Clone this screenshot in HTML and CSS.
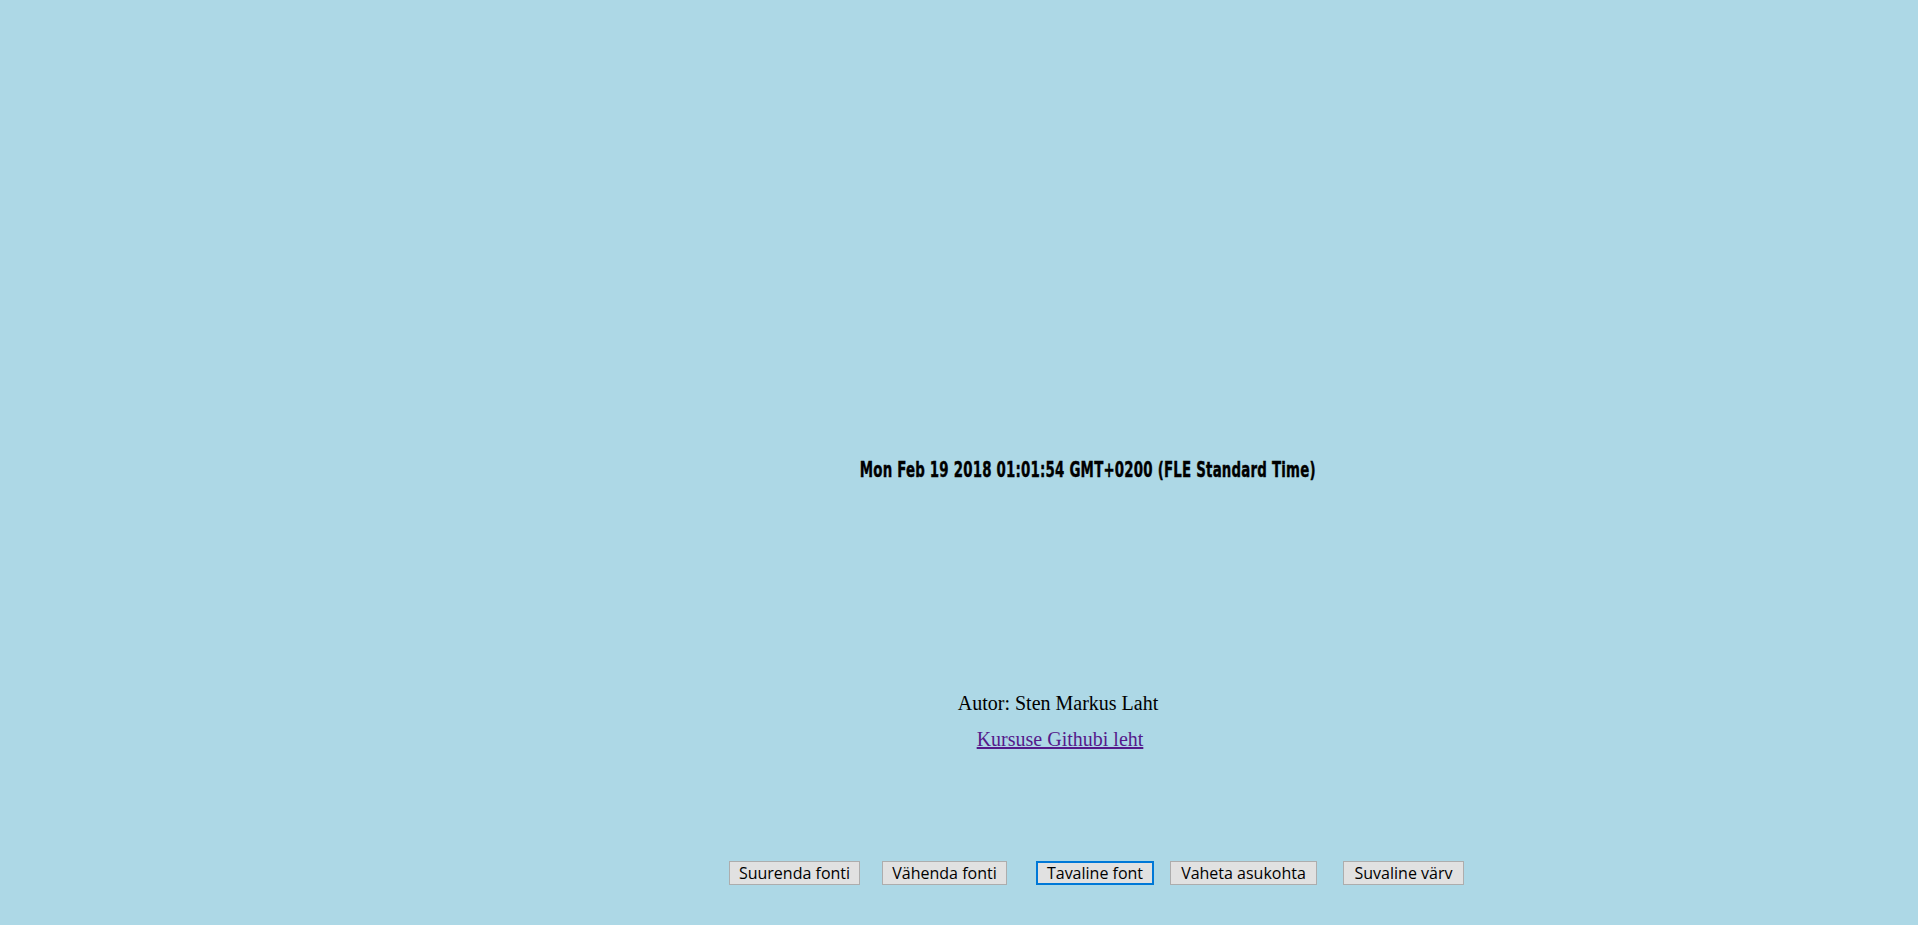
FILE: index.html
```html
<!DOCTYPE html>
<html>
<head>
<meta charset="utf-8">
<link rel="stylesheet" href="styles.css">
</head>
<body>
<div class="page">
  <div class="clock"><span class="clock-text">Mon Feb 19 2018 01:01:54 GMT+0200 (FLE Standard Time)</span></div>
  <div class="author">Autor: Sten Markus Laht</div>
  <div class="linkrow"><a href="#" class="gh">Kursuse Githubi leht</a></div>
  <div class="buttons">
    <button class="btn b1">Suurenda fonti</button>
    <button class="btn b2">Vähenda fonti</button>
    <button class="btn b3 focus">Tavaline font</button>
    <button class="btn b4">Vaheta asukohta</button>
    <button class="btn b5">Suvaline värv</button>
  </div>
</div>
</body>
</html>
```

FILE: styles.css
```css
html, body {
  margin: 0;
  padding: 0;
  background: #add8e6;
}
.page {
  height: 925px;
  display: flex;
  flex-direction: column;
  font-family: "Liberation Serif", "Times New Roman", serif;
}
.clock {
  margin-top: 456px;
  padding-left: 258px;
  text-align: center;
  font-family: "DejaVu Sans Condensed", "DejaVu Sans", sans-serif;
  font-weight: bold;
  font-size: 22px;
  line-height: 28px;
  color: #000;
}
.clock-text {
  display: inline-block;
  transform: scaleX(0.675);
  letter-spacing: 0.3px;
  -webkit-text-stroke: 0.4px #000;
}
.author {
  margin-top: 207px;
  padding-left: 198px;
  text-align: center;
  font-size: 20px;
  line-height: 24px;
  color: #000;
}
.linkrow {
  margin-top: 12px;
  padding-left: 202px;
  text-align: center;
  font-size: 20px;
  line-height: 24px;
}
.gh {
  color: #551a8b;
}
.buttons {
  margin-top: 110px;
  padding-left: 729px;
  display: flex;
  align-items: flex-start;
}
.btn {
  height: 24px;
  box-sizing: border-box;
  background: #e1e1e1;
  border: 1px solid #adadad;
  font-family: "Open Sans", "Noto Sans", sans-serif;
  font-size: 16px;
  line-height: 20px;
  padding: 0;
  color: #000;
  text-align: center;
}
.b1 { width: 131px; }
.b2 { width: 125px; margin-left: 22px; }
.b3 { width: 118px; margin-left: 29px; }
.b4 { width: 147px; margin-left: 16px; }
.b5 { width: 121px; margin-left: 26px; }
.focus {
  border: 2px solid #0078d7;
}
```
